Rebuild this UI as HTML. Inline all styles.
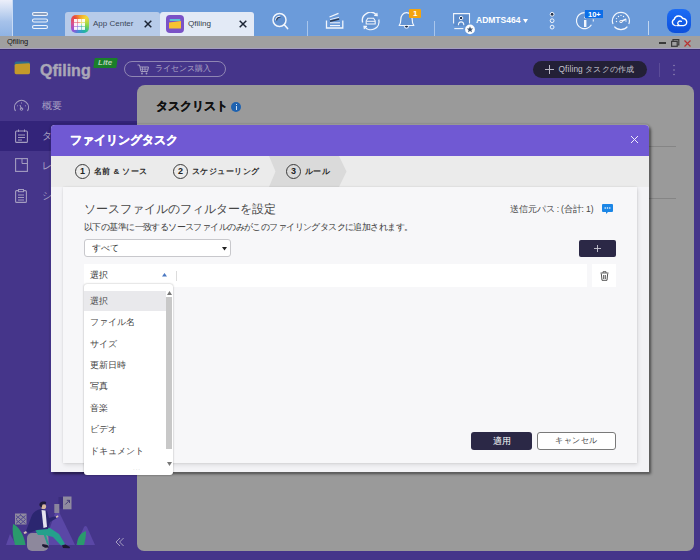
<!DOCTYPE html>
<html><head><meta charset="utf-8">
<style>
*{box-sizing:border-box;margin:0;padding:0}
html,body{width:700px;height:560px;overflow:hidden;font-family:"Liberation Sans",sans-serif;background:#45358a}
.a{position:absolute}
.t{position:absolute;white-space:nowrap;line-height:1}
#top{left:0;top:0;width:700px;height:36px;background:#6b9bda}
#topl{left:0;top:0;width:13px;height:36px;background:linear-gradient(#eceffa,#c9d9f2 30%,#a6c2ea 60%,#8fb3e4);border-right:1px solid #c8dbf5}
.tab{top:12px;height:24px;border-radius:3px 3px 0 0}
#title{left:0;top:36px;width:700px;height:12px;background:#a0a0a0}
#app{left:0;top:48px;width:700px;height:512px;background:#45358a;border-top:1px solid #a59dc2}
#app:before{content:"";position:absolute;left:0;top:0;width:700px;height:1px;background:#3a2d70}
#main{left:137px;top:85px;width:557px;height:466px;background:#9a9a9a;border-radius:8px 8px 7px 7px}
#modal{left:51px;top:125px;width:598px;height:347px;background:#f3f3f6;border-radius:4px 4px 0 0;box-shadow:2px 2px 3px rgba(0,0,0,.45)}
#mh{left:0;top:0;width:598px;height:31px;background:#7059d3;border-radius:4px 4px 0 0}
#modal:before{content:"";position:absolute;left:-1px;top:-1px;right:-1px;bottom:-1px;border-radius:5px 5px 1px 1px;box-shadow:0 0 2px rgba(0,0,0,.25)}
#steps{left:0;top:31px;width:598px;height:31px;background:#ebebeb;overflow:hidden}
#inner{left:12px;top:62px;width:574px;height:276px;background:#f7f7f9;box-shadow:0 0 2px rgba(0,0,0,.1),1px 2px 4px rgba(0,0,0,.1)}
.circ{position:absolute;width:15px;height:15px;border:1px solid #333;border-radius:50%;font-size:9px;font-weight:bold;color:#222;text-align:center;line-height:13.5px;border-color:#3a3a3a}
.st{font-size:8px;letter-spacing:.45px;font-weight:bold;color:#2a2a2a}
.dd{font-size:8.5px;color:#454545}
</style></head><body>
<!-- top bar -->
<div id="top" class="a"></div>
<div id="topl" class="a"></div>
<!-- hamburger -->
<svg class="a" style="left:31px;top:11px" width="18" height="19" viewBox="0 0 18 19">
 <rect x="1.5" y="1.5" width="15" height="3" rx="1.5" fill="#8a9fbf" stroke="#eef3fb" stroke-width="1.1"/>
 <rect x="1.5" y="8" width="15" height="3" rx="1.5" fill="#6d9dda" stroke="#eef3fb" stroke-width="1.1"/>
 <rect x="1.5" y="14.5" width="15" height="3" rx="1.5" fill="#6d9dda" stroke="#eef3fb" stroke-width="1.1"/>
</svg>
<!-- tab 1 -->
<div class="a tab" style="left:65px;width:95px;background:#b7cbe9"></div>
<div class="a" style="left:71px;top:15px;width:18px;height:17.5px;border-radius:5px;background:conic-gradient(#f3a02a 0deg,#f2d83a 45deg,#8ad64a 100deg,#20b5a0 145deg,#3f8fd8 190deg,#9a50d6 230deg,#d9508f 275deg,#e8483c 320deg,#f3a02a 360deg)"></div>
<svg class="a" style="left:74px;top:18.5px" width="11" height="11" viewBox="0 0 11 11"><g fill="#fff" opacity=".93"><rect x="0" y="0" width="3.4" height="3.3"/><rect x="3.8" y="0" width="3.4" height="3.3"/><rect x="7.6" y="0" width="3.4" height="3.3"/><rect x="0" y="3.8" width="3.4" height="3.3"/><rect x="3.8" y="3.8" width="3.4" height="3.3"/><rect x="7.6" y="3.8" width="3.4" height="3.3"/><rect x="0" y="7.6" width="3.4" height="3.3"/><rect x="3.8" y="7.6" width="3.4" height="3.3"/><rect x="7.6" y="7.6" width="3.4" height="3.3"/></g></svg>
<span class="t" style="left:93px;top:19.7px;font-size:8px;color:#3a4658">App Center</span>
<svg class="a" style="left:144px;top:20px" width="8" height="8" viewBox="0 0 8 8"><path d="M.7.7l6.6 6.6M7.3.7L.7 7.3" stroke="#1c2535" stroke-width="1.5"/></svg>
<!-- tab 2 -->
<div class="a tab" style="left:160px;width:94px;background:#e3eaf6"></div>
<svg class="a" style="left:166px;top:15px" width="18" height="18" viewBox="0 0 18 18">
 <rect x="0" y="0" width="18" height="18" rx="4" fill="#7a52c7"/>
 <rect x="3.5" y="4" width="11" height="2" rx="1" fill="#5cc3d6"/>
 <path d="M3 7.5 L15 6 V13.5 H3 Z" fill="#f5c232"/>
</svg>
<span class="t" style="left:188px;top:19.7px;font-size:8.1px;color:#333c48">Qfiling</span>
<svg class="a" style="left:239px;top:20px" width="8" height="8" viewBox="0 0 8 8"><path d="M.7.7l6.6 6.6M7.3.7L.7 7.3" stroke="#1c2535" stroke-width="1.5"/></svg>
<!-- search -->
<svg class="a" style="left:270px;top:11px" width="20" height="20" viewBox="0 0 20 20">
 <circle cx="9.5" cy="9" r="6.5" fill="#5f8fcf" stroke="#f2f6fc" stroke-width="1.5"/>
 <path d="M5.8 9.3 A4 4 0 0 1 10.2 5.3" stroke="#eef3fb" stroke-width="1.3" fill="none"/>
 <path d="M6.6 9.6 A3.3 3.3 0 0 1 10.4 6.3" stroke="#2f3e58" stroke-width="1.2" fill="none"/>
 <path d="M14.3 13.8 L17.6 17.6" stroke="#f2f6fc" stroke-width="1.6" stroke-linecap="round"/>
</svg>
<div class="a" style="left:307px;top:21px;width:1px;height:15px;background:#a9c6ec"></div>
<!-- stack icon -->
<svg class="a" style="left:325px;top:11px" width="20" height="19" viewBox="0 0 20 19">
 <path d="M1.5 9.4 V17 H17.8 V9.4" fill="none" stroke="#f2f6fc" stroke-width="1.3"/>
 <path d="M4.5 6 L13.5 2.3" stroke="#f2f6fc" stroke-width="1.3"/>
 <path d="M5 8.6 L14 6.3" stroke="#f2f6fc" stroke-width=".9"/>
 <path d="M5 10.3 L14.2 8" stroke="#2a3850" stroke-width="1.7"/>
 <path d="M5 11.8 H15" stroke="#f2f6fc" stroke-width="1"/>
 <path d="M5 14.6 H15" stroke="#f2f6fc" stroke-width="1.2"/>
</svg>
<!-- sync -->
<svg class="a" style="left:361px;top:12px" width="20" height="19" viewBox="0 0 20 19">
 <circle cx="9.7" cy="8.8" r="7" fill="#6393d2"/>
 <path d="M1.6 10.5 A8.2 8.2 0 0 1 15.6 3" fill="none" stroke="#f2f6fc" stroke-width="1.3"/>
 <path d="M17.8 7.5 A8.2 8.2 0 0 1 3.6 14.8" fill="none" stroke="#f2f6fc" stroke-width="1.3"/>
 <path d="M13.2 3.4 L16.2 3.6 L15.8 0.8" fill="none" stroke="#f2f6fc" stroke-width="1.2"/>
 <path d="M6 14.4 L3 14.3 L3.4 17.1" fill="none" stroke="#f2f6fc" stroke-width="1.2"/>
 <path d="M5.2 12 V8.8 L6.8 6.2 H12.6 L14.2 8.8 V12 Z" fill="none" stroke="#f2f6fc" stroke-width="1.1"/>
 <path d="M5.5 9.3 H14" stroke="#f2f6fc" stroke-width="1"/>
</svg>
<!-- bell -->
<svg class="a" style="left:397px;top:11px" width="19" height="19" viewBox="0 0 19 19">
 <path d="M2.2 14.5 C3.6 13 3.8 11.5 3.8 8.5 C3.8 4.5 6.2 1.6 9.5 1.6 C12.8 1.6 15.2 4.5 15.2 8.5 C15.2 11.5 15.4 13 16.8 14.5 Z" fill="#6393d2" stroke="#f2f6fc" stroke-width="1.2" stroke-linejoin="round"/>
 <path d="M7.3 15.2 A2.2 2 0 0 0 11.7 15.2" fill="none" stroke="#f2f6fc" stroke-width="1"/>
 <ellipse cx="9.5" cy="15.6" rx="1.5" ry=".8" fill="#1e2a40"/>
</svg>
<div class="a" style="left:409px;top:9px;width:12px;height:9px;background:#f4a40e;border-radius:1px"></div>
<span class="t" style="left:413px;top:10px;font-size:8px;font-weight:bold;color:#fff">1</span>
<div class="a" style="left:434px;top:21px;width:1px;height:15px;background:#a9c6ec"></div>
<!-- user -->
<svg class="a" style="left:451px;top:11px" width="26" height="26" viewBox="0 0 26 26">
 <rect x="2.6" y="2.6" width="15.9" height="12.5" fill="#5d8dcd"/>
 <path d="M2.6 12.5 V2.6 H18.5 V12.5" fill="none" stroke="#f2f6fc" stroke-width="1.1"/>
 <path d="M3.3 17.6 H12.4" stroke="#f2f6fc" stroke-width="1.1"/>
 <circle cx="10.1" cy="7" r="1.7" fill="#22304a" stroke="#f2f6fc" stroke-width="1"/>
 <path d="M7.4 14.2 C7.4 12 8.4 10.9 10.1 10.9 C11.8 10.9 12.8 12 12.8 14.2" fill="none" stroke="#f2f6fc" stroke-width="1.1"/>
 <circle cx="19" cy="18.4" r="4.9" fill="#fff"/>
 <path d="M19 15.2 L19.9 17.4 L22.2 17.5 L20.4 19 L21 21.3 L19 20.1 L17 21.3 L17.6 19 L15.8 17.5 L18.1 17.4 Z" fill="#3b5170"/>
</svg>
<span class="t" style="left:476px;top:16px;font-size:8.5px;font-weight:bold;color:#fff">ADMTS464</span>
<svg class="a" style="left:523px;top:19px" width="5" height="4" viewBox="0 0 5 4"><path d="M0 0H5L2.5 4Z" fill="#fff"/></svg>
<!-- three dots -->
<svg class="a" style="left:548px;top:10px" width="9" height="21" viewBox="0 0 9 21">
 <circle cx="4.1" cy="4.3" r="1.9" fill="#22304a" stroke="#f2f6fc" stroke-width="1"/>
 <circle cx="4.1" cy="10.7" r="1.9" fill="none" stroke="#f2f6fc" stroke-width="1"/>
 <circle cx="4.1" cy="17.1" r="1.9" fill="none" stroke="#f2f6fc" stroke-width="1"/>
</svg>
<!-- info -->
<svg class="a" style="left:575px;top:11px" width="20" height="20" viewBox="0 0 20 20">
 <circle cx="9.5" cy="9.7" r="7.5" fill="#6393d2"/>
 <path d="M9.5 1.7 A8 8 0 1 0 16.4 13.7" fill="none" stroke="#f2f6fc" stroke-width="1.2"/>
 <path d="M18.3 8.3 V10.5" stroke="#f2f6fc" stroke-width="1"/>
 <rect x="9" y="9" width="2.4" height="7" fill="#f2f6fc"/>
 <circle cx="10.2" cy="6.5" r="1" fill="#f2f6fc"/>
</svg>
<div class="a" style="left:585px;top:10px;width:18px;height:8px;background:#0b6ee8"></div>
<span class="t" style="left:588px;top:10.5px;font-size:7.5px;font-weight:bold;color:#fff">10+</span>
<!-- speedometer -->
<svg class="a" style="left:611px;top:11px" width="20" height="20" viewBox="0 0 20 20">
 <circle cx="9.9" cy="9.6" r="8" fill="#6393d2"/>
 <path d="M2 13 A8.5 8.5 0 1 1 17.8 13" fill="none" stroke="#f2f6fc" stroke-width="1.2"/>
 <path d="M3.4 15.6 A8.5 8.5 0 0 0 16.4 15.6" fill="none" stroke="#f2f6fc" stroke-width="1.2"/>
 <g fill="#f2f6fc"><circle cx="5.5" cy="7.6" r=".7"/><circle cx="7.5" cy="5.5" r=".7"/><circle cx="10" cy="4.4" r=".7"/><circle cx="12.5" cy="5.5" r=".7"/><circle cx="15" cy="10" r=".7"/><circle cx="5.5" cy="10.5" r=".7"/></g>
 <path d="M10 10.5 L14.8 8.2" stroke="#f2f6fc" stroke-width="1.5" stroke-linecap="round"/>
 <circle cx="10" cy="10.5" r="1.6" fill="#f2f6fc"/>
 <circle cx="10" cy="10.5" r=".6" fill="#3a4f70"/>
</svg>
<div class="a" style="left:648px;top:21px;width:1px;height:14px;background:#c1d6f1"></div>
<!-- cloud app -->
<div class="a" style="left:667px;top:9px;width:24px;height:24px;border-radius:8px;background:linear-gradient(#1b6cf6,#0c4fdc)"></div>
<svg class="a" style="left:670px;top:14px" width="18" height="14" viewBox="0 0 18 14">
 <path d="M5.2 11.6 A3.3 3.3 0 0 1 4.2 5.4 A4.6 4.6 0 0 1 12.8 4.6 A3.4 3.4 0 0 1 13.6 11.6 H6.8" fill="none" stroke="#fff" stroke-width="1.4" stroke-linecap="round"/>
 <path d="M11.4 7.4 A2.4 2.2 0 1 0 9.2 11.3" fill="none" stroke="#fff" stroke-width="1.3" stroke-linecap="round"/>
</svg>

<!-- title bar -->
<div id="title" class="a"></div>
<span class="t" style="left:7px;top:38px;font-size:7.5px;color:#151515">Qfiling</span>
<div class="a" style="left:659px;top:42px;width:7px;height:1.5px;background:#3a3a3a"></div>
<svg class="a" style="left:671px;top:39px" width="9" height="8" viewBox="0 0 9 8"><path d="M2 2.2V.6H7.8V6H6.4" fill="none" stroke="#3a3a3a" stroke-width="1.2"/><rect x=".6" y="2.4" width="5.6" height="4.9" fill="none" stroke="#3a3a3a" stroke-width="1.2"/></svg>
<svg class="a" style="left:684px;top:39.5px" width="7" height="7" viewBox="0 0 7 7"><path d="M.5.5l6 6M6.5.5l-6 6" stroke="#b83232" stroke-width="1.2"/></svg>

<!-- app -->
<div id="app" class="a"></div>
<!-- sidebar -->
<svg class="a" style="left:14px;top:60px" width="17" height="16" viewBox="0 0 17 16">
 <rect x=".6" y="1.4" width="15.4" height="6" rx="2" fill="#2e6f8c"/>
 <path d="M.6 5.5 Q.6 4.2 2 4 L14.6 3.2 Q16 3.1 16 4.5 V12.6 Q16 14.2 14.4 14.2 H2.2 Q.6 14.2 .6 12.6 Z" fill="#c49a2a"/>
</svg>
<span class="t" style="left:40px;top:62.5px;font-size:16px;font-weight:bold;color:#aaa7b7;-webkit-text-stroke:.4px #aaa7b7">Qfiling</span>
<div class="a" style="left:94px;top:58px;width:23px;height:10px;background:#1a7f2a;transform:skewX(-8deg);border-radius:1px"></div>
<span class="t" style="left:98px;top:59px;font-size:8px;font-style:italic;font-weight:bold;color:#b6cfb8">Lite</span>
<div class="a" style="left:124px;top:61px;width:102px;height:16px;border:1px solid #8f86b3;border-radius:8px"></div>
<svg class="a" style="left:137px;top:64px" width="12" height="11" viewBox="0 0 12 11">
 <path d="M.5 1H2.5L4 7.5H10.5L11.5 3H3" fill="none" stroke="#a49dc0" stroke-width="1"/>
 <path d="M5.5 3V7.5M8 3V7.5M3.5 5.2H11" stroke="#a49dc0" stroke-width=".8"/>
 <circle cx="5" cy="9.5" r=".9" fill="#a49dc0"/><circle cx="9.5" cy="9.5" r=".9" fill="#a49dc0"/>
</svg>
<span class="t" style="left:155px;top:65px;font-size:8.1px;color:#aaa3c4">ライセンス購入</span>

<div class="a" style="left:533px;top:61px;width:114px;height:17px;background:#232036;border-radius:9px"></div>
<svg class="a" style="left:545px;top:65px" width="9" height="9" viewBox="0 0 9 9"><path d="M4.5 0V9M0 4.5H9" stroke="#b9b7c4" stroke-width="1"/></svg>
<span class="t" style="left:558.5px;top:65px;font-size:8.3px;letter-spacing:.12px;color:#c4c3ce">Qfiling タスクの作成</span>
<div class="a" style="left:659px;top:63px;width:1px;height:14px;background:#5b4c98"></div>
<svg class="a" style="left:672px;top:64px" width="4" height="12" viewBox="0 0 4 12"><circle cx="2" cy="1.5" r=".8" fill="#8f86b3"/><circle cx="2" cy="6" r=".8" fill="#8f86b3"/><circle cx="2" cy="10.5" r=".8" fill="#8f86b3"/></svg>

<!-- nav -->
<svg class="a" style="left:13px;top:99px" width="17" height="13" viewBox="0 0 17 13">
 <path d="M2.5 12 A7 7 0 1 1 14.5 12" fill="none" stroke="#a49dc0" stroke-width="1.1"/>
 <path d="M8.5 10 L7 6" stroke="#a49dc0" stroke-width="1"/>
 <circle cx="8.5" cy="10" r="1.3" fill="none" stroke="#a49dc0" stroke-width="1"/>
 <path d="M4 6.5l.8.5M8.5 3.5v1M13 6.5l-.8.5" stroke="#a49dc0" stroke-width="1"/>
</svg>
<span class="t" style="left:42px;top:101px;font-size:9.5px;color:#aaa3c4">概要</span>
<div class="a" style="left:0;top:121px;width:137px;height:30px;background:#33247a"></div>
<svg class="a" style="left:15px;top:129px" width="13" height="14" viewBox="0 0 13 14">
 <rect x=".6" y="2" width="11.8" height="11.4" rx="1" fill="none" stroke="#a49dc0" stroke-width="1.1"/>
 <path d="M3.5 .5V3M9.5 .5V3M3 6H10M3 8.5H10M3 11H7" stroke="#a49dc0" stroke-width="1"/>
</svg>
<span class="t" style="left:42px;top:131px;font-size:9.5px;color:#aaa3c4">タスク</span>
<svg class="a" style="left:15px;top:158px" width="13" height="14" viewBox="0 0 13 14">
 <rect x=".6" y=".6" width="11.8" height="12.8" fill="none" stroke="#a49dc0" stroke-width="1.1"/>
 <path d="M7 .6V5.5H12.4" fill="none" stroke="#a49dc0" stroke-width="1"/>
</svg>
<span class="t" style="left:42px;top:161px;font-size:9.5px;color:#aaa3c4">レポート</span>
<svg class="a" style="left:15px;top:189px" width="12" height="14" viewBox="0 0 12 14">
 <rect x=".6" y="1.6" width="10.8" height="11.8" rx="1" fill="none" stroke="#a49dc0" stroke-width="1.1"/>
 <rect x="3.5" y=".5" width="5" height="2.2" fill="#45358a" stroke="#a49dc0" stroke-width="1"/>
 <path d="M3 6H9M3 8.5H9M3 11H9" stroke="#a49dc0" stroke-width="1"/>
</svg>
<span class="t" style="left:42px;top:191px;font-size:9.5px;color:#aaa3c4">システム</span>

<!-- illustration -->
<svg class="a" style="left:0;top:490px" width="137" height="70" viewBox="0 0 137 70">
 <path d="M6 55 L10 44 L16 55 Z" fill="#5c48a6"/>
 <path d="M44 55 L55 23 Q57 20 59.5 23 L75 55 Z" fill="#5a47a6"/>
 <path d="M76 55 L84 37 Q85.5 35 87 37 L95 55 Z" fill="#5a47a6"/>
 <rect x="58.5" y="7" width="4.5" height="11.5" fill="#3b2d7c"/>
 <rect x="54.3" y="14" width="5" height="9" fill="#8a849d"/>
 <rect x="63" y="6.5" width="8.5" height="12.8" fill="#8f8a9f"/>
 <path d="M65.3 14.5 L69.3 10.5 M66.8 10.3 H69.5 V13" fill="none" stroke="#3d3570" stroke-width=".9"/>
 <rect x="15" y="23.5" width="11.5" height="11" fill="#8f8a9f"/>
 <path d="M16 25.5 L25.5 33.5 M16 29.5 L21 34 M20 24.5 L25.5 29 M25.5 25.5 L16 33.5 M25.5 29.5 L20.5 34 M21 24.5 L16 29" stroke="#4e4690" stroke-width="1"/>
 <path d="M13 34 C18 36 24 44 25.5 55 H15 C13 48 12 40 13 34 Z" fill="#2a9a6c"/>
 <path d="M77 55 C77 48 80 43 86 41 C86 47 85 51 84 55 Z" fill="#2a9a6c"/>
 <rect x="27" y="43" width="21.5" height="18" rx="5" fill="#8d889c"/>
 <path d="M35 40 C37 37 44 36 50 38 L59 44 L65 54 L61 55.5 L53 47 L45 45 L38 45 Z" fill="#24a08c"/>
 <path d="M43 43 L47 54 L49 55 L46 45 Z" fill="#24a08c"/>
 <path d="M26 41 L32 25 Q35 20 41 19 L47 21 L49 28 L56 26 L57 28 L50 32 L48 39 L37 40 L29 43 Z" fill="#2b2670"/>
 <path d="M41.5 20 L45.5 20.5 L47 37 L43.5 38 Z" fill="#e5e3ee"/>
 <path d="M55.5 26.5 L58 25.3 L58.5 26.8 L56.5 28 Z" fill="#d7c1b5"/>
 <path d="M23.5 42.5 L26 41 L27 43 L24.5 44 Z" fill="#d7c1b5"/>
 <circle cx="43.5" cy="16.5" r="2.6" fill="#d8b89e"/>
 <path d="M39.5 15.5 C39 12 42 11 45 11.5 C46.5 12 46.5 13.5 45.5 14 L42.5 14.5 L41.5 18 Z" fill="#1f1a3a"/>
 <path d="M42.5 54 L47.5 55 L49 57.5 L45 57.8 L42 56 Z" fill="#1c1830"/>
 <path d="M62 55.5 L65.5 54.5 L70 57 L69.5 58.3 L63 58 Z" fill="#1c1830"/>
 <path d="M120 48 L116 52 L120 56 M123.6 48 L119.6 52 L123.6 56" fill="none" stroke="#a49dc0" stroke-width="1"/>
</svg>

<!-- main panel -->
<div id="main" class="a">
  <span class="t" style="left:19px;top:15px;font-size:12px;font-weight:bold;color:#111;-webkit-text-stroke:.25px #111">タスクリスト</span>
  <div class="a" style="left:94px;top:17px;width:10px;height:10px;border-radius:50%;background:#1e62b0"></div>
  <div class="a" style="left:98.5px;top:19px;width:1.2px;height:1.2px;background:#cfe0f5"></div>
  <div class="a" style="left:98.5px;top:21px;width:1.2px;height:4px;background:#cfe0f5"></div>
  <div class="a" style="left:512px;top:61px;width:27px;height:1px;background:#858585"></div>
  <div class="a" style="left:512px;top:113px;width:27px;height:1px;background:#858585"></div>
</div>

<!-- modal -->
<div id="modal" class="a">
  <div id="mh" class="a">
    <span class="t" style="left:19px;top:8.8px;font-size:12px;font-weight:bold;color:#fff;-webkit-text-stroke:.3px #fff">ファイリングタスク</span>
    <svg class="a" style="left:579px;top:10px" width="9" height="9" viewBox="0 0 9 9"><path d="M1 1l7 7M8 1L1 8" stroke="#f0edfb" stroke-width="1"/></svg>
  </div>
  <div id="steps" class="a">
    <svg class="a" style="left:0;top:0" width="598" height="31" viewBox="0 0 598 31"><path d="M218 0 H288 L295.5 15.5 L288 31 H218 L224.5 15.5 Z" fill="#dadada"/></svg>
    <div class="circ" style="left:24px;top:7.5px">1</div>
    <span class="t st" style="left:43px;top:11.7px">名前 &amp; ソース</span>
    <div class="circ" style="left:122px;top:7.5px">2</div>
    <span class="t st" style="left:141px;top:11.7px">スケジューリング</span>
    <div class="circ" style="left:235px;top:7.5px">3</div>
    <span class="t st" style="left:254px;top:11.7px">ルール</span>
  </div>
  <div id="inner" class="a">
    <span class="t" style="left:21px;top:16px;font-size:12px;color:#464646">ソースファイルのフィルターを設定</span>
    <span class="t" style="left:21px;top:36px;font-size:9px;letter-spacing:-.58px;color:#3a3a3a">以下の基準に一致するソースファイルのみがこのファイリングタスクに追加されます。</span>
    <span class="t" style="left:447px;top:18px;font-size:8.5px;letter-spacing:-.12px;color:#444">送信元パス : (合計: 1)</span>
    <svg class="a" style="left:539px;top:17px" width="11" height="10" viewBox="0 0 11 10"><path d="M1 0H10A1 1 0 0 1 11 1V7A1 1 0 0 1 10 8H6L4 10V8H1A1 1 0 0 1 0 7V1A1 1 0 0 1 1 0Z" fill="#1b86e6"/><circle cx="3.2" cy="4" r=".8" fill="#fff"/><circle cx="5.5" cy="4" r=".8" fill="#fff"/><circle cx="7.8" cy="4" r=".8" fill="#fff"/></svg>
    <!-- select all -->
        <div class="a" style="left:21px;top:52px;width:147px;height:18px;border:1px solid #c8c8cc;border-radius:3px;background:#fff"></div>
    <span class="t" style="left:29px;top:57px;font-size:8.5px;color:#333">すべて</span>
    <svg class="a" style="left:158.5px;top:59.5px" width="5" height="4" viewBox="0 0 5 4"><path d="M0 0H5L2.5 3.6Z" fill="#222"/></svg>
    <!-- plus -->
    <div class="a" style="left:516px;top:53px;width:37px;height:17px;background:#2b2846;border-radius:2px"></div>
    <svg class="a" style="left:531px;top:58px" width="7" height="7" viewBox="0 0 7 7"><path d="M3.5 0V7M0 3.5H7" stroke="#c9c8d4" stroke-width=".9"/></svg>
    <!-- row -->
    <div class="a" style="left:21px;top:77px;width:503px;height:23px;background:#fff"></div>
    <span class="t" style="left:27px;top:84px;font-size:8.5px;color:#333">選択</span>
    <svg class="a" style="left:99px;top:86px" width="5" height="3.5" viewBox="0 0 5 3.5"><path d="M0 3.5H5L2.5 0Z" fill="#4a78c2"/></svg>
    <div class="a" style="left:113px;top:84px;width:1px;height:10px;background:#dcdcdc"></div>
    <div class="a" style="left:529px;top:77px;width:24px;height:23px;background:#fff"></div>
    <svg class="a" style="left:537px;top:84px" width="9" height="10" viewBox="0 0 9 10"><path d="M.5 2H8.5M3 2V.7H6V2" fill="none" stroke="#555" stroke-width=".9"/><path d="M1.3 2.5L2 9.3H7L7.7 2.5" fill="none" stroke="#555" stroke-width="1"/><path d="M3.7 4V8M5.3 4V8" stroke="#555" stroke-width="1"/></svg>
    <!-- buttons -->
    <div class="a" style="left:408px;top:245px;width:61px;height:17.5px;background:#2b2846;border-radius:3px"></div>
    <span class="t" style="left:430px;top:250px;font-size:8.5px;color:#fff">適用</span>
    <div class="a" style="left:474px;top:245px;width:79px;height:17.5px;background:#fff;border:1px solid #7a7a7a;border-radius:3px"></div>
    <span class="t" style="left:492px;top:250px;font-size:8px;letter-spacing:.5px;color:#444">キャンセル</span>
  </div>
</div>

<!-- dropdown -->
<div class="a" style="left:84px;top:284px;width:89px;height:191px;background:#fff;border-radius:3px;box-shadow:0 0 2px rgba(0,0,0,.35)">
  <div class="a" style="left:0;top:6.5px;width:82px;height:20.5px;background:#e9e9ec"></div>
  <div class="a" style="left:82px;top:13px;width:6px;height:152px;background:#c8c8c8"></div>
  <svg class="a" style="left:82.5px;top:7px" width="5" height="4" viewBox="0 0 5 4"><path d="M0 4H5L2.5 0Z" fill="#777"/></svg>
  <svg class="a" style="left:82.5px;top:178px" width="5" height="4" viewBox="0 0 5 4"><path d="M0 0H5L2.5 4Z" fill="#777"/></svg>
  <span class="t dd" style="left:6px;top:12.5px">選択</span>
  <span class="t dd" style="left:6px;top:34px">ファイル名</span>
  <span class="t dd" style="left:6px;top:55.5px">サイズ</span>
  <span class="t dd" style="left:6px;top:77px">更新日時</span>
  <span class="t dd" style="left:6px;top:98px">写真</span>
  <span class="t dd" style="left:6px;top:119.5px">音楽</span>
  <span class="t dd" style="left:6px;top:141px">ビデオ</span>
  <span class="t dd" style="left:6px;top:162.5px">ドキュメント</span>
  <span class="t" style="left:49px;top:181px;font-size:6px;color:#ccc;letter-spacing:1px">...</span>
</div>
</body></html>
